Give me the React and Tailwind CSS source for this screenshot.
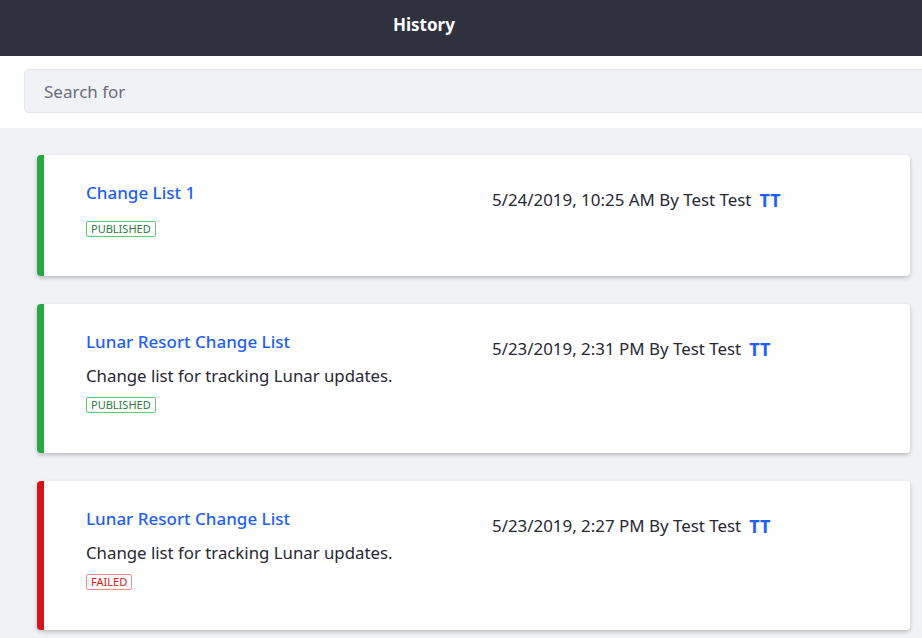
const items = [
  {
    id: 1,
    title: "Change List 1",
    description: "",
    status: "published",
    date: "5/24/2019, 10:25 AM",
  },
  {
    id: 2,
    title: "Lunar Resort Change List",
    description: "Change list for tracking Lunar updates.",
    status: "published",
    date: "5/23/2019, 2:31 PM",
  },
  {
    id: 3,
    title: "Lunar Resort Change List",
    description: "Change list for tracking Lunar updates.",
    status: "failed",
    date: "5/23/2019, 2:27 PM",
  },
];

function StatusLabel({ status }) {
  if (status === "failed") {
    return (
      <span className="inline-block border border-[#f48989] text-[#da1414] rounded-[2px] px-[4px] text-[11px] leading-[14px] uppercase">
        Failed
      </span>
    );
  }
  return (
    <span className="inline-block border border-[#5aca75] text-[#287d3c] rounded-[2px] px-[4px] text-[11px] leading-[14px] uppercase">
      Published
    </span>
  );
}

function HistoryCard({ item }) {
  const accent = item.status === "failed" ? "border-l-[#d9121a]" : "border-l-[#28a745]";
  return (
    <div
      className={`flex bg-white rounded-[4px] border-l-[7px] ${accent} shadow-[0_2px_4px_rgba(0,0,0,0.22)] pl-[42px] pt-[27px] ${item.description ? "pb-[40px]" : "pb-[39px]"}`}
    >
      <div className="w-[406px] shrink-0">
        <a href="#" className="block text-[#1f5ff5] text-[17px] font-medium leading-[22px]">
          {item.title}
        </a>
        {item.description && (
          <p className="text-[#272833] text-[16.8px] leading-[22px] mt-[12px]">{item.description}</p>
        )}
        <div className={`flex ${item.description ? "mt-[10px]" : "mt-[17px]"}`}>
          <StatusLabel status={item.status} />
        </div>
      </div>
      <div className="flex items-center gap-[8px] pt-[7px] self-start text-[16.9px] leading-[22px] text-[#272833]">
        <span>
          {item.date} By Test Test
        </span>
        <span className="text-[#1f5ff5] font-bold text-[18px]">TT</span>
      </div>
    </div>
  );
}

export default function App() {
  return (
    <div className="min-h-screen bg-[#f1f2f5] font-['Noto_Sans',sans-serif]">
      <div className="h-[56px] bg-[#30313f] flex items-center pl-[393px] pb-[6px]">
        <h1 className="text-white text-[17px] font-bold">History</h1>
      </div>
      <div className="bg-white pl-[24px] pt-[13px] pb-[15px]">
        <input
          type="text"
          placeholder="Search for"
          className="w-[920px] h-[44px] bg-[#f1f2f5] border border-[#e7e7ed] rounded-[4px] px-[19px] text-[17px] placeholder:text-[#6b6c7e] focus:outline-none"
        />
      </div>
      <div className="pl-[37px] pr-[12px] pt-[27px] pb-[20px] flex flex-col gap-[28px]">
        {items.map((item) => (
          <HistoryCard key={item.id} item={item} />
        ))}
      </div>
    </div>
  );
}
